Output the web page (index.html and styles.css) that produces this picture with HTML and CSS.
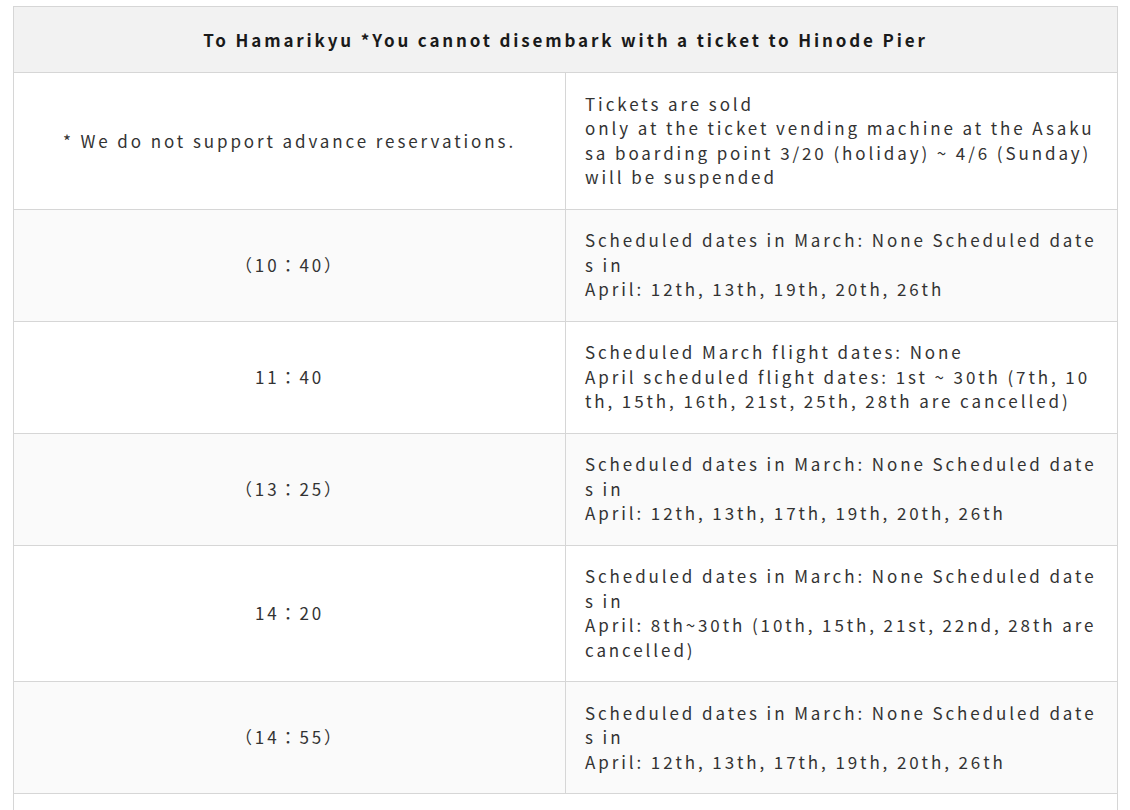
FILE: index.html
```html
<!DOCTYPE html>
<html lang="en">
<head>
<meta charset="utf-8">
<link rel="stylesheet" href="styles.css">
</head>
<body>
<div class="wrap">
  <table class="schedule">
    <thead>
      <tr><th colspan="2">To Hamarikyu *You cannot disembark with a ticket to Hinode Pier</th></tr>
    </thead>
    <tbody>
      <tr>
        <td class="time">* We do not support advance reservations.</td>
        <td class="note">Tickets are sold<br>only at the ticket vending machine at the Asakusa boarding point 3/20 (holiday) ~ 4/6 (Sunday) will be suspended</td>
      </tr>
      <tr>
        <td class="time">（10：40）</td>
        <td class="note">Scheduled dates in March: None Scheduled dates in<br>April: 12th, 13th, 19th, 20th, 26th</td>
      </tr>
      <tr>
        <td class="time">11：40</td>
        <td class="note">Scheduled March flight dates: None<br>April scheduled flight dates: 1st ~ 30th (7th, 10th, 15th, 16th, 21st, 25th, 28th are cancelled)</td>
      </tr>
      <tr>
        <td class="time">（13：25）</td>
        <td class="note">Scheduled dates in March: None Scheduled dates in<br>April: 12th, 13th, 17th, 19th, 20th, 26th</td>
      </tr>
      <tr>
        <td class="time">14：20</td>
        <td class="note">Scheduled dates in March: None Scheduled dates in<br>April: 8th~30th (10th, 15th, 21st, 22nd, 28th are cancelled)</td>
      </tr>
      <tr>
        <td class="time">（14：55）</td>
        <td class="note">Scheduled dates in March: None Scheduled dates in<br>April: 12th, 13th, 17th, 19th, 20th, 26th</td>
      </tr>
      <tr class="footer-row">
        <td class="footer" colspan="2"></td>
      </tr>
    </tbody>
  </table>
</div>
</body>
</html>
```

FILE: styles.css
```css
html, body {
  margin: 0;
  padding: 0;
  background: #ffffff;
}

.wrap {
  padding: 6px 12px 0 13px;
}

.schedule {
  width: 1105px;
  border-collapse: collapse;
  table-layout: fixed;
  font-family: "Noto Sans CJK JP", "Noto Sans", sans-serif;
  color: #333333;
}

.schedule th {
  background: #f2f2f2;
  border: 1px solid #d6d6d6;
  height: 65px;
  padding: 0 20px;
  font-size: 17px;
  font-weight: 700;
  letter-spacing: 2.85px;
  color: #1a1a1a;
  text-align: center;
  vertical-align: middle;
}

.schedule td {
  border: 1px solid #d6d6d6;
  padding: 18.75px 18.5px 18.75px 19px;
  font-size: 17px;
  font-weight: 400;
  line-height: 24.5px;
  letter-spacing: 2.9px;
  vertical-align: middle;
  word-break: break-all;
}

.schedule tbody tr:nth-child(even) td {
  background: #fafafa;
}

.schedule tbody tr.footer-row td {
  background: #ffffff;
  height: 40px;
}

.schedule td.time {
  text-align: center;
  padding-left: 18.75px;
  padding-right: 18.75px;
}

.schedule td.note {
  text-align: left;
}
```
